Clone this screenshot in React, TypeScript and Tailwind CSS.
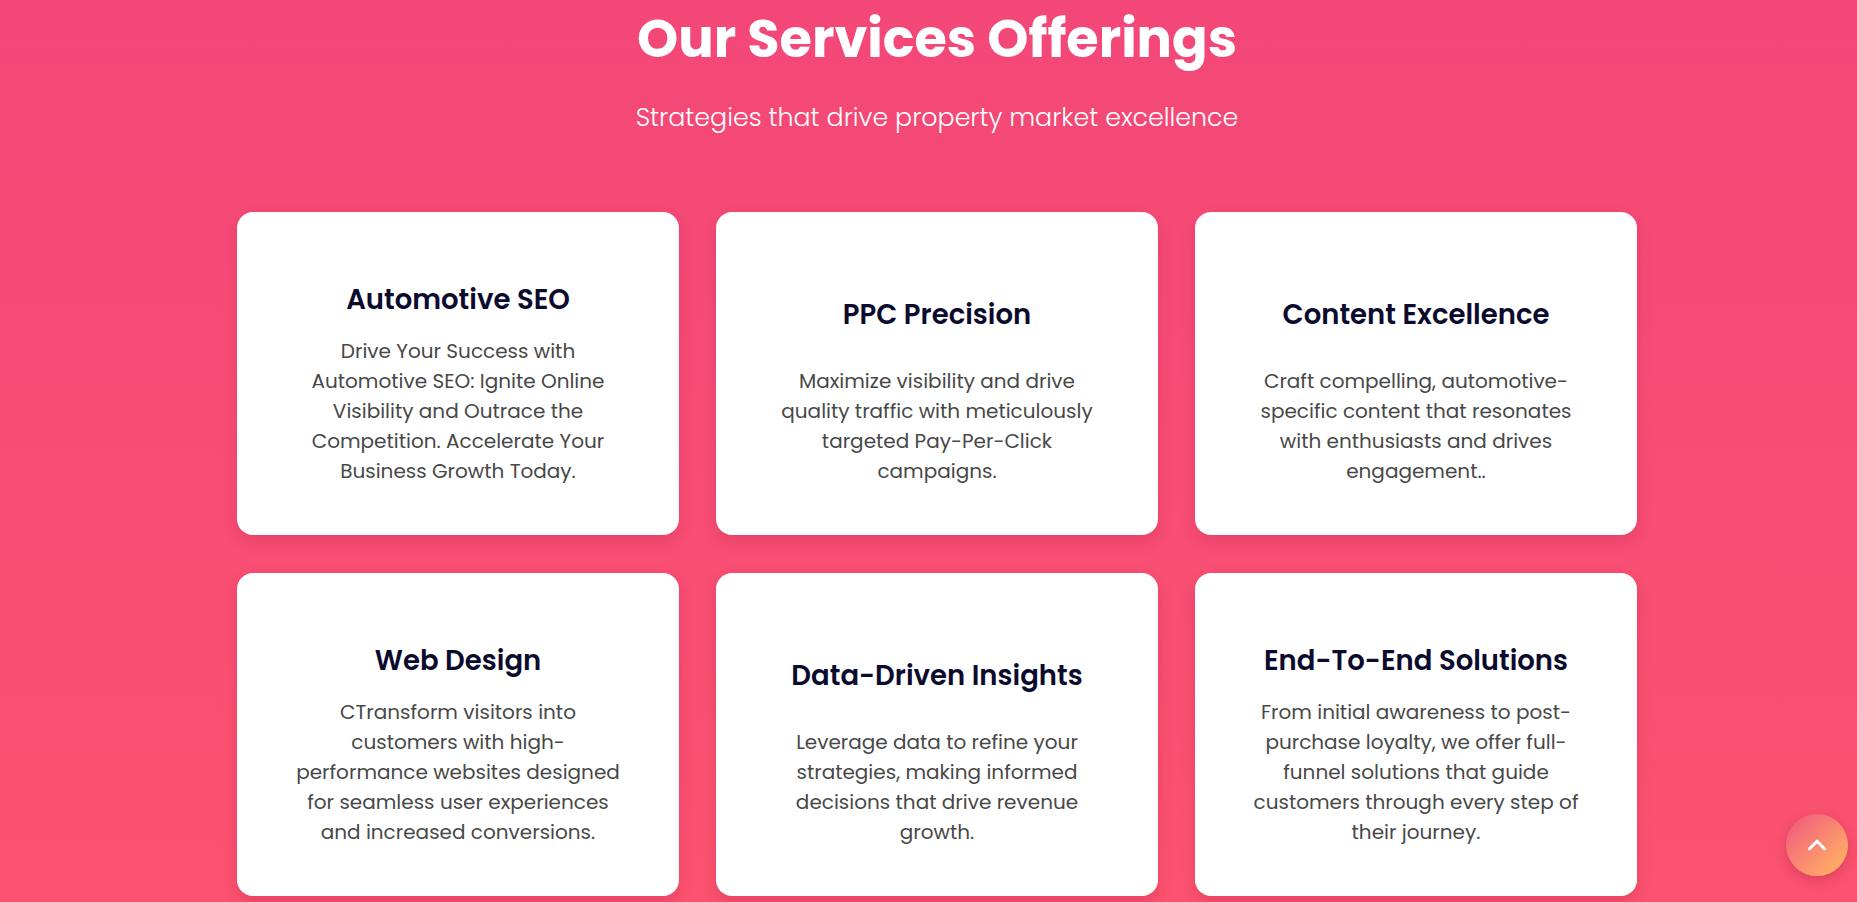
import { ChevronUp } from "lucide-react";

const services = [
  {
    title: "Automotive SEO",
    lines: [
      "Drive Your Success with",
      "Automotive SEO: Ignite Online",
      "Visibility and Outrace the",
      "Competition. Accelerate Your",
      "Business Growth Today.",
    ],
  },
  {
    title: "PPC Precision",
    lines: [
      "Maximize visibility and drive",
      "quality traffic with meticulously",
      "targeted Pay-Per-Click",
      "campaigns.",
    ],
  },
  {
    title: "Content Excellence",
    lines: [
      "Craft compelling, automotive-",
      "specific content that resonates",
      "with enthusiasts and drives",
      "engagement..",
    ],
  },
  {
    title: "Web Design",
    lines: [
      "CTransform visitors into",
      "customers with high-",
      "performance websites designed",
      "for seamless user experiences",
      "and increased conversions.",
    ],
  },
  {
    title: "Data-Driven Insights",
    lines: [
      "Leverage data to refine your",
      "strategies, making informed",
      "decisions that drive revenue",
      "growth.",
    ],
  },
  {
    title: "End-To-End Solutions",
    lines: [
      "From initial awareness to post-",
      "purchase loyalty, we offer full-",
      "funnel solutions that guide",
      "customers through every step of",
      "their journey.",
    ],
  },
];

function ServiceCard({ title, lines }: { title: string; lines: string[] }) {
  return (
    <div className="flex h-[323px] flex-col rounded-2xl bg-white px-10 pt-[52px] pb-[49px] text-center shadow-[0_6px_14px_rgba(180,30,70,0.25)]">
      <div className="flex flex-1 items-center justify-center">
        <h3 className="text-[27.5px] font-semibold leading-9 text-[#0b0b2e]">{title}</h3>
      </div>
      <p className="text-[20px] leading-[30px] text-[#484848]">
        {lines.map((line) => (
          <span key={line} className="block whitespace-nowrap">
            {line}
          </span>
        ))}
      </p>
    </div>
  );
}

export default function App() {
  return (
    <div
      className="relative min-h-screen overflow-hidden bg-gradient-to-b from-[#f34778] to-[#fb526f]"
      style={{ fontFamily: "Poppins, Inter, 'Noto Sans', sans-serif" }}
    >
      <section className="flex flex-col items-center pt-[8px] pl-[17px]">
        <h2 className="text-[52.5px] font-bold leading-[62px] text-white">Our Services Offerings</h2>
        <p className="mt-[29px] text-[25.3px] font-light leading-9 text-white">
          Strategies that drive property market excellence
        </p>

        <div className="mt-[77px] grid w-[1400px] grid-cols-3 gap-x-[37px] gap-y-[38px]">
          {services.map((s) => (
            <ServiceCard key={s.title} title={s.title} lines={s.lines} />
          ))}
        </div>
      </section>

      <button className="fixed right-[9px] bottom-[26px] flex h-[62px] w-[62px] items-center justify-center rounded-full bg-gradient-to-br from-[#ef4f7c] to-[#ffb95c] text-white shadow-[0_4px_12px_rgba(150,30,60,0.3)]">
        <ChevronUp size={30} strokeWidth={2.5} />
      </button>
    </div>
  );
}
